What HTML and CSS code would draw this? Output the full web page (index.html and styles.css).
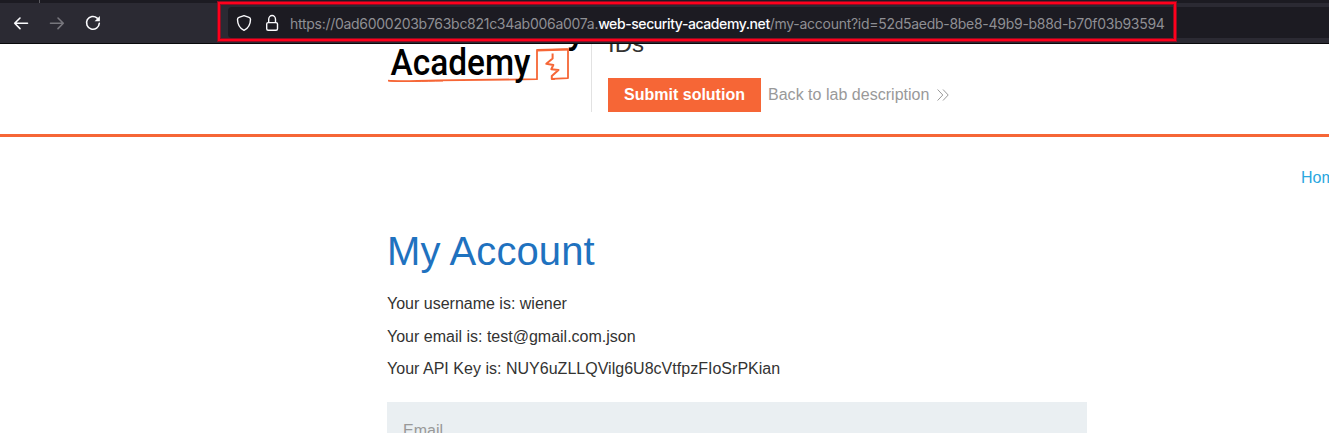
FILE: index.html
```html
<!DOCTYPE html>
<html lang="en">
<head>
<meta charset="utf-8">
<title>My Account</title>
<link rel="stylesheet" href="styles.css">
</head>
<body>
<div class="browser">
  <div class="tabs"><span class="tab-divider"></span></div>
  <div class="toolbar">
    <svg class="nav" viewBox="0 0 110 40" width="110" height="40" fill="none" stroke-width="1.6" stroke-linecap="round" stroke-linejoin="round">
      <path class="light" d="M27.5 20.3H14.7M20 15l-5.3 5.3L20 25.6"/>
      <path class="dim" d="M50.5 20.3h12.8M58 15l5.3 5.3-5.3 5.3"/>
      <path class="light" d="M97.2 15.1A6.4 6.4 0 1 0 99.3 20.2"/>
      <path class="fill" d="M99.9 12.9v5.3h-5.3z"/>
    </svg>
    <div class="address">
      <svg class="security" viewBox="0 0 54 31" width="54" height="31" fill="none" stroke="#fbfbfe" stroke-width="1.4" stroke-linejoin="round">
        <path d="M16 8.6l5 1.700q1.500.600 1.500 2.200c-.100 5-2.300 8.800-6.500 10.800-4.200-2-6.400-5.800-6.500-10.800q0-1.600 1.500-2.200z"/>
        <rect x="38.700" y="15.600" width="10.800" height="7.600" rx="1.500"/>
        <path d="M40.700 15.500v-3.200a3.400 3.800 0 0 1 6.800 0v3.200"/>
      </svg>
      <span class="url"><span class="sub">https://0ad6000203b763bc821c34ab006a007a.</span><span class="domain">web-security-academy.net</span><span class="path">/my-account?id=52d5aedb-8be8-49b9-b88d-b70f03b93594</span></span>
    </div>
  </div>
  <div class="highlight"></div>
</div>
<header class="lab-header">
  <svg class="logo" viewBox="387 44 204 68" width="204" height="68">
    <text class="brand" x="567" y="43" textLength="18" lengthAdjust="spacingAndGlyphs">y</text>
    <g fill="none" stroke="#f66636" stroke-linejoin="round">
      <path d="M388 80.700c12 1 20 .3 49-.3l100-1.200 0-29.200 31-.9 0 29-16 .8" stroke-width="1.800"/>
      <path d="M389 80.800c16 1.300 34 .4 54 .2" stroke-width="1"/>
      <path d="M537 50.500l30.500-1" stroke-width="1.800"/>
      <path d="M552.600 53.500v5l-6.300 5.300 7 1.200-2 4.200 7.200.8-6.700 6v3h3" stroke-width="2"/>
    </g>
    <text class="brand" x="390.500" y="75" textLength="140" lengthAdjust="spacingAndGlyphs">Academy</text>
  </svg>
  <div class="lab-info">
    <h2>IDs</h2>
    <div class="actions">
      <button class="submit">Submit solution</button>
      <a class="back">Back to lab description
        <svg viewBox="0 0 12 12" width="12" height="12" fill="none" stroke="#999" stroke-width="1"><path d="M.6.500l5.200 5.500-5.200 5.500M6 .500l5.200 5.500L6 11.500"/></svg>
      </a>
    </div>
  </div>
</header>
<nav class="links"><a>Home</a></nav>
<main>
  <h1>My Account</h1>
  <p>Your username is: wiener</p>
  <p>Your email is: test@gmail.com.json</p>
  <p class="key">Your API Key is: NUY6uZLLQVilg6U8cVtfpzFIoSrPKian</p>
  <div class="form"><label>Email</label></div>
</main>
</body>
</html>
```

FILE: styles.css
```css
* { box-sizing: border-box; }
html, body { height: 433px; overflow: hidden; }
body { margin: 0; background: #fff; color: #333332; font: 16px/20px "Liberation Sans", Arial, sans-serif; }
.browser { position: relative; height: 44px; background: #2b2a33; border-bottom: 1px solid #09090b; }
.tabs { height: 3px; padding-left: 39px; background: #1c1b22; }
.tab-divider { display: block; width: 1px; height: 3px; background: #5b5a60; }
.toolbar { display: flex; height: 40px; }
.nav { flex: none; margin-right: 118px; }
.light { stroke: #fbfbfe; }
.dim { stroke: #77767d; }
.fill { fill: #fbfbfe; }
.address { flex: 1; display: flex; align-items: center; height: 31px; margin-top: 4px; border-radius: 4px 0 0 4px; background: #1c1b22; }
.security { flex: none; margin-right: 8px; }
.url { display: flex; font: 14px/31px Inter, sans-serif; letter-spacing: -0.280px; color: #8f8f94; white-space: nowrap; padding-top: 2px; }
.domain { color: #fbfbfe; font-weight: 500; letter-spacing: -0.410px; }
.highlight { position: absolute; left: 217px; top: 1px; width: 960px; height: 41px; border: 1px solid #8c0f23; }
.highlight::after { content: ""; position: absolute; inset: 0; border: 2px solid #ff001c; outline: 1px solid #8c0f23; outline-offset: -3px; }
.lab-header { display: flex; height: 93px; border-bottom: 3px solid #f66636; }
.logo { flex: none; margin-left: 387px; }
.brand { font: 500 37px Roboto, sans-serif; fill: #000; }
.lab-info { height: 68px; padding-left: 16px; border-left: 1px solid #e2e2e2; overflow: hidden; }
h2 { margin: -15px 0 0; font-size: 24px; line-height: 30px; font-weight: 400; }
.actions { display: flex; align-items: center; margin-top: 19px; }
.submit { width: 153px; height: 34px; padding: 0; border: 0; background: #f66636; color: #fff; font: 700 16px/34px "Liberation Sans", Arial, sans-serif; }
.back { display: flex; align-items: center; gap: 8px; margin-left: 7px; color: #999; letter-spacing: 0.020px; }
.links { height: 76px; padding: 31px 0 0 1301px; color: #29a7df; white-space: nowrap; }
main { width: 700px; margin-left: 387px; }
h1 { margin: 14px 0 13px; color: #1f72bf; font-size: 40px; line-height: 48px; font-weight: 400; letter-spacing: 0.100px; }
p { margin: 0; line-height: 32.500px; }
.key { letter-spacing: 0.020px; }
.form { height: 31px; margin-top: 16px; padding: 19px 16px 0; background: #eaeff2; color: #999; overflow: hidden; }
```
